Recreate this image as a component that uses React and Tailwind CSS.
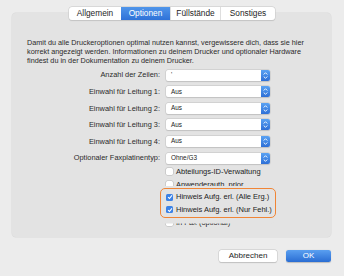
import React from "react";

const Stepper = () => (
  <div className="flex h-full w-[9px] flex-col items-center justify-center gap-[1px] rounded-r-[2px] bg-gradient-to-b from-[#5aa2f3] to-[#2e6fd6]">
    <svg width="5" height="3" viewBox="0 0 5 3"><path d="M0.7 2.5 L2.5 0.7 L4.3 2.5" fill="none" stroke="#fff" strokeWidth="0.9" /></svg>
    <svg width="5" height="3" viewBox="0 0 5 3"><path d="M0.7 0.5 L2.5 2.3 L4.3 0.5" fill="none" stroke="#fff" strokeWidth="0.9" /></svg>
  </div>
);

const Popup = ({ label, value }) => (
  <div className="flex h-[11px] items-center">
    <div className="w-[149px] pr-[1px] text-right text-[7.4px] leading-none text-[#2a2a2a]">{label}</div>
    <div className="ml-[5px] flex h-[11px] w-[104px] items-stretch rounded-[2px] bg-white shadow-[0_0_0_0.5px_#c4c4c4,0_0.5px_1px_rgba(0,0,0,0.15)]">
      <div className="flex flex-1 items-center pl-[5px] text-[6.4px] leading-none text-[#222]">{value}</div>
      <Stepper />
    </div>
  </div>
);

const Check = ({ checked, label }) => (
  <div className="flex h-[12.8px] items-center">
    {checked ? (
      <div className="flex h-[7px] w-[7px] items-center justify-center rounded-[1.5px] bg-[#3b82e6]">
        <svg width="6" height="6" viewBox="0 0 6 6"><path d="M1.1 3.1 L2.5 4.5 L4.9 1.3" fill="none" stroke="#fff" strokeWidth="1.1" /></svg>
      </div>
    ) : (
      <div className="h-[7px] w-[7px] rounded-[1.5px] bg-white shadow-[0_0_0_0.5px_#b5b5b5]" />
    )}
    <span className="ml-[3px] text-[7.5px] leading-none text-[#222]">{label}</span>
  </div>
);

export default function App() {
  const tabs = [
    { t: "Allgemein", w: "w-[52px]" },
    { t: "Optionen", w: "w-[49px]", active: true },
    { t: "Füllstände", w: "w-[50px]" },
    { t: "Sonstiges", w: "w-[55px]" },
  ];
  return (
    <div className="relative h-[276px] w-[344px] overflow-hidden bg-[#ececec] font-['Liberation_Sans',Arial,sans-serif]">
      <div className="relative z-10 mt-[7px] flex justify-center">
        <div className="flex h-[13px] overflow-hidden rounded-[3px] bg-white shadow-[0_0_0_0.5px_#c8c8c8,0_0.5px_1px_rgba(0,0,0,0.15)]">
          {tabs.map((x) => (
            <div
              key={x.t}
              className={
                x.active
                  ? `${x.w} flex items-center justify-center bg-gradient-to-b from-[#4f95ea] to-[#2f72d8] text-[8.3px] leading-none text-white`
                  : `${x.w} flex items-center justify-center border-l border-[#dedede] text-[8.3px] leading-none text-[#1e1e1e] first:border-l-0`
              }
            >
              {x.t}
            </div>
          ))}
        </div>
      </div>
      <div className="relative -mt-[7px] ml-[12px] h-[224px] w-[319px] rounded-[4px] bg-[#e3e3e3] shadow-[0_0_0_0.5px_#d9d9d9]">
        <p className="pl-[15px] pt-[24.5px] text-[7.25px] leading-[9.2px] text-[#2a2a2a]">
          Damit du alle Druckeroptionen optimal nutzen kannst, vergewissere dich, dass sie hier
          <br />
          korrekt angezeigt werden. Informationen zu deinem Drucker und optionaler Hardware
          <br />
          findest du in der Dokumentation zu deinem Drucker.
        </p>
        <div className="mt-[4.5px] flex flex-col gap-[5.6px]">
          <Popup label="Anzahl der Zeilen:" value="'" />
          <Popup label="Einwahl für Leitung 1:" value="Aus" />
          <Popup label="Einwahl für Leitung 2:" value="Aus" />
          <Popup label="Einwahl für Leitung 3:" value="Aus" />
          <Popup label="Einwahl für Leitung 4:" value="Aus" />
          <Popup label="Optionaler Faxplatinentyp:" value="Ohne/G3" />
        </div>
        <div className="mt-[1.5px] pl-[154px]">
          <Check label="Abteilungs-ID-Verwaltung" />
          <Check label="Anwenderauth. prior." />
          <div className="relative">
            <div className="absolute -bottom-[1.5px] -left-[6px] -top-[3px] z-0 w-[116px] rounded-[5px] border-[1.5px] border-[#f08536] bg-[#e3e3e3] shadow-[0_0_0_2px_#e3e3e3,0_3.5px_0_2px_#e3e3e3]" />
            <div className="relative z-10">
              <Check checked label="Hinweis Aufg. erl. (Alle Erg.)" />
              <Check checked label="Hinweis Aufg. erl. (Nur Fehl.)" />
            </div>
          </div>
          <Check label="In Fax (optional)" />
        </div>
      </div>
      <div className="mt-[13px] flex justify-end gap-[9px] pr-[13px]">
        <div className="flex h-[12px] w-[58px] items-center justify-center rounded-[2.5px] bg-white text-[8px] leading-none text-[#1e1e1e] shadow-[0_0_0_0.5px_#c8c8c8,0_0.5px_1px_rgba(0,0,0,0.2)]">
          Abbrechen
        </div>
        <div className="flex h-[12px] w-[45px] items-center justify-center rounded-[2.5px] bg-gradient-to-b from-[#5a9ff0] to-[#2a6dd3] text-[8px] leading-none text-white shadow-[0_0.5px_1px_rgba(0,0,0,0.2)]">
          OK
        </div>
      </div>
    </div>
  );
}
